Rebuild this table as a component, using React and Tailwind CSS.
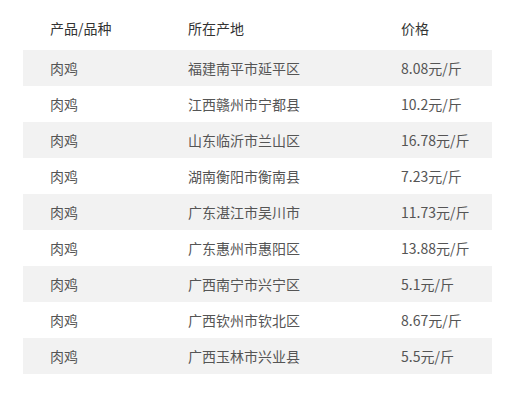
import React from "react";

const rows = [
  ["肉鸡", "福建南平市延平区", "8.08元/斤"],
  ["肉鸡", "江西赣州市宁都县", "10.2元/斤"],
  ["肉鸡", "山东临沂市兰山区", "16.78元/斤"],
  ["肉鸡", "湖南衡阳市衡南县", "7.23元/斤"],
  ["肉鸡", "广东湛江市吴川市", "11.73元/斤"],
  ["肉鸡", "广东惠州市惠阳区", "13.88元/斤"],
  ["肉鸡", "广西南宁市兴宁区", "5.1元/斤"],
  ["肉鸡", "广西钦州市钦北区", "8.67元/斤"],
  ["肉鸡", "广西玉林市兴业县", "5.5元/斤"],
];

const App = () => {
  return (
    <div
      className="w-[519px] h-[405px] bg-white pt-[6px] text-[14px] text-[#555]"
      style={{ fontFamily: '"Noto Sans CJK SC", "Open Sans", sans-serif' }}
    >
      <div className="ml-[23px] w-[469px]">
        {/* header */}
        <div className="flex items-center h-[44px] pl-[27px] text-[#333]">
          <div className="w-[138px]">产品/品种</div>
          <div className="w-[213px]">所在产地</div>
          <div>价格</div>
        </div>

        {/* rows */}
        {rows.map((r, i) => (
          <div
            key={i}
            className={`flex items-center h-[36px] pl-[27px] ${i % 2 === 0 ? "bg-[#f2f2f2]" : "bg-white"}`}
          >
            <div className="w-[138px]">{r[0]}</div>
            <div className="w-[213px]">{r[1]}</div>
            <div>{r[2]}</div>
          </div>
        ))}
      </div>
    </div>
  );
};

export default App;
